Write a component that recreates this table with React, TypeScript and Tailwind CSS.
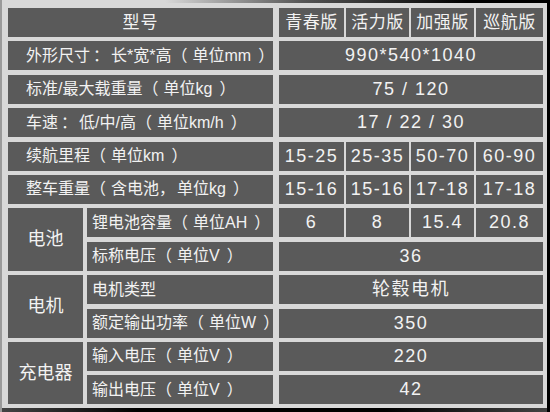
import React from 'react'

type Row = { label: string; values: string | string[] }

const topRows: Row[] = [
  { label: '外形尺寸：长*宽*高（单位mm）', values: '990*540*1040' },
  { label: '标准/最大载重量（单位kg）', values: '75 / 120' },
  { label: '车速：低/中/高（单位km/h）', values: '17 / 22 / 30' },
  { label: '续航里程（单位km）', values: ['15-25', '25-35', '50-70', '60-90'] },
  { label: '整车重量（含电池，单位kg）', values: ['15-16', '15-16', '17-18', '17-18'] },
]

const groups: { name: string; rows: Row[] }[] = [
  {
    name: '电池',
    rows: [
      { label: '锂电池容量（单位AH）', values: ['6', '8', '15.4', '20.8'] },
      { label: '标称电压（单位V）', values: '36' },
    ],
  },
  {
    name: '电机',
    rows: [
      { label: '电机类型', values: '轮毂电机' },
      { label: '额定输出功率（单位W）', values: '350' },
    ],
  },
  {
    name: '充电器',
    rows: [
      { label: '输入电压（单位V）', values: '220' },
      { label: '输出电压（单位V）', values: '42' },
    ],
  },
]

const cell = 'flex h-[29px] items-center bg-[#5a5a5a] text-[#f2f2f2]'
const colW = ['w-[65px]', 'w-[63px]', 'w-[63px]', 'w-[67px]']

// the source font sets full-width punctuation centred, with air on both sides
const punct: Record<string, string> = {
  '（': 'mr-[5px]',
  '）': 'ml-[7px]',
  '：': 'ml-[3px] mr-[2px]',
  '，': 'mr-[2px]',
}

const Label = ({ text }: { text: string }) => (
  <span className="whitespace-nowrap">
    {text.split(/([（）：，])/).map((part, i) =>
      punct[part] ? (
        <span key={i} className={punct[part]}>
          {part}
        </span>
      ) : (
        part
      ),
    )}
  </span>
)

const Values = ({ values, header }: { values: string | string[]; header?: boolean }) => {
  if (typeof values === 'string') {
    return (
      <div className={`${cell} w-[264px] justify-center text-[18px] tracking-[1.5px]`}>
        {values}
      </div>
    )
  }
  return (
    <div className="flex w-[264px] gap-[2px]">
      {values.map((v, i) => (
        <div
          key={i}
          className={`${cell} ${colW[i]} justify-center ${
            header ? 'text-[17px] tracking-[0.5px]' : 'text-[18px] tracking-[1.5px]'
          }`}
        >
          {v}
        </div>
      ))}
    </div>
  )
}

export default function App() {
  return (
    <div className="h-[412px] w-[550px] bg-[#d8d8d8] bg-[linear-gradient(to_right,transparent_30%,#555_55%,#000_85%),linear-gradient(to_right,#444,#000_25%,#000_70%,#444)] bg-[length:100%_3px,100%_4px] bg-[position:top,bottom] bg-no-repeat pt-[8px] pr-[7px] pl-[8px] shadow-[inset_2px_0_0_#9a9a9a,inset_-3px_0_0_#000] [font-family:'Liberation_Sans','Noto_Sans_CJK_SC',sans-serif]">
      <div className="flex flex-col gap-[4.4px]">
        <div className="flex gap-[6px]">
          <div className={`${cell} w-[265px] justify-center text-[17px] tracking-[1px]`}>型号</div>
          <Values values={['青春版', '活力版', '加强版', '巡航版']} header />
        </div>

        {topRows.map((r) => (
          <div key={r.label} className="flex gap-[6px]">
            <div className={`${cell} w-[265px] pl-[18px] text-[16px]`}>
              <Label text={r.label} />
            </div>
            <Values values={r.values} />
          </div>
        ))}

        {groups.map((g) => (
          <div key={g.name} className="flex gap-[4px]">
            <div className="flex w-[75px] items-center justify-center bg-[#5a5a5a] text-[18px] text-[#f2f2f2]">
              {g.name}
            </div>
            <div className="flex flex-col gap-[4.4px]">
              {g.rows.map((r) => (
                <div key={r.label} className="flex gap-[6px]">
                  <div className={`${cell} w-[186px] pl-[5px] text-[16px]`}>
                    <Label text={r.label} />
                  </div>
                  <Values values={r.values} />
                </div>
              ))}
            </div>
          </div>
        ))}
      </div>
    </div>
  )
}
